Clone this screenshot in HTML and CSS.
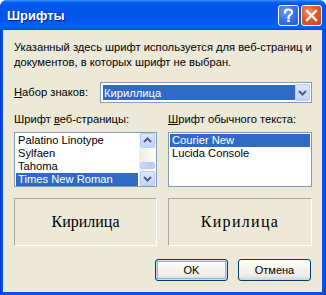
FILE: index.html
```html
<!DOCTYPE html>
<html lang="ru">
<head>
<meta charset="utf-8">
<title>Шрифты</title>
<link rel="stylesheet" href="styles.css">
</head>
<body>
<div class="window">
  <div class="titlebar">
    <span class="title">Шрифты</span>
    <div class="caption-buttons">
      <div class="cap-btn help">
        <svg width="21" height="21" viewBox="0 0 21 21"><path d="M7 7.5 Q7 4.5 10.5 4.5 Q14 4.5 14 7.3 Q14 9 12.2 10 Q10.5 11 10.5 12.8" fill="none" stroke="#fff" stroke-width="2.2" stroke-linecap="square"/><rect x="9.3" y="14.6" width="2.4" height="2.4" fill="#fff"/></svg>
      </div>
      <div class="cap-btn close">
        <svg width="21" height="21" viewBox="0 0 21 21"><path d="M6 6 L15 15 M15 6 L6 15" stroke="#fff" stroke-width="2.3" stroke-linecap="square"/></svg>
      </div>
    </div>
  </div>
  <div class="client">
    <p class="desc">Указанный здесь шрифт используется для веб-страниц и документов, в которых шрифт не выбран.</p>
    <div class="charset-row">
      <span class="label"><u>Н</u>абор знаков:</span>
      <div class="combo">
        <span class="combo-value">Кириллица</span>
        <span class="combo-btn">
          <svg width="15" height="17" viewBox="0 0 15 17"><path d="M4 7 L7.5 10.5 L11 7" fill="none" stroke="#4D6185" stroke-width="2"/></svg>
        </span>
      </div>
    </div>
    <div class="columns">
      <div class="col">
        <span class="label">Шрифт <u>в</u>еб-страницы:</span>
        <div class="listbox">
          <ul class="items">
            <li>Palatino Linotype</li>
            <li>Sylfaen</li>
            <li>Tahoma</li>
            <li class="sel">Times New Roman</li>
          </ul>
          <div class="scrollbar">
            <span class="sb-btn"><svg width="15" height="15" viewBox="0 0 15 15"><path d="M4 9 L7.5 5.5 L11 9" fill="none" stroke="#4D6185" stroke-width="2"/></svg></span>
            <span class="sb-track"><span class="sb-thumb"></span></span>
            <span class="sb-btn"><svg width="15" height="15" viewBox="0 0 15 15"><path d="M4 6 L7.5 9.5 L11 6" fill="none" stroke="#4D6185" stroke-width="2"/></svg></span>
          </div>
        </div>
      </div>
      <div class="col">
        <span class="label"><u>Ш</u>рифт обычного текста:</span>
        <div class="listbox">
          <ul class="items">
            <li class="sel">Courier New</li>
            <li>Lucida Console</li>
          </ul>
        </div>
      </div>
      <div class="preview serif">Кирилица</div>
      <div class="preview mono">Кирилица</div>
    </div>
    <div class="buttons">
      <button class="btn default">OK</button>
      <button class="btn">Отмена</button>
    </div>
  </div>
</div>
</body>
</html>
```
FILE: styles.css
```css
html, body {
  margin: 0;
  padding: 0;
  background: #ffffff;
}
.window {
  width: 326px;
  height: 295px;
  display: flex;
  flex-direction: column;
  background: linear-gradient(to right, #0831D9 0, #0054E3 2px, #0054E3 calc(100% - 2px), #0831D9 100%);
  border-radius: 7px 7px 0 0;
  overflow: hidden;
  font-family: "Liberation Sans", Arial, sans-serif;
  font-size: 11.2px;
  color: #000;
}
.titlebar {
  height: 30px;
  flex: none;
  display: flex;
  align-items: center;
  justify-content: space-between;
  padding: 0 4px 0 7px;
  background: linear-gradient(to bottom, #3D95FF 0, #0A66F7 2px, #0058EE 4px, #0055E8 40%, #0058EE 70%, #0064FA 88%, #005AEB 96%, #0046D8 100%);
}
.title {
  color: #fff;
  font-family: "Liberation Sans", Arial, sans-serif;
  font-weight: bold;
  font-size: 13px;
  text-shadow: 1px 1px 0 #0F1E8C;
  padding-top: 1px;
}
.caption-buttons {
  display: flex;
  gap: 2px;
  padding-top: 1px;
}
.cap-btn {
  width: 21px;
  height: 21px;
  box-sizing: border-box;
  border: 1px solid #fff;
  border-radius: 3px;
  display: flex;
  align-items: center;
  justify-content: center;
}
.cap-btn svg { display: block; margin: -1px; }
.help {
  background: radial-gradient(circle at 35% 30%, #6C9DF8 0, #3E76EA 45%, #2356D8 100%);
}
.close {
  background: radial-gradient(circle at 35% 30%, #F0906A 0, #E2582F 45%, #C8401C 100%);
}
.client {
  flex: 1;
  margin: 0 4px 3px 3px;
  background: #ECE9D8;
  padding: 10px 10px 0 11px;
  display: flex;
  flex-direction: column;
}
.desc {
  margin: 0;
  line-height: 15px;
  width: 300px;
}
.label { white-space: nowrap; }
.charset-row {
  margin-top: 12px;
  display: flex;
  align-items: center;
  justify-content: space-between;
}
.combo {
  width: 212px;
  height: 21px;
  box-sizing: border-box;
  border: 1px solid #7F9DB9;
  background: #fff;
  display: flex;
  align-items: center;
  padding: 1px;
}
.combo-value {
  flex: 1;
  align-self: stretch;
  margin: 1px 0 1px 1px;
  background: #316AC5;
  color: #fff;
  padding-left: 1px;
  display: flex;
  align-items: center;
}
.combo-btn {
  width: 15px;
  height: 17px;
  flex: none;
  box-sizing: border-box;
  border: 1px solid #B9CBF3;
  border-radius: 2px;
  background: linear-gradient(to bottom, #DCE6FD, #C1D3FB);
}
.combo-btn svg, .sb-btn svg { display: block; margin: -1px; }
.columns {
  margin-top: 10px;
  display: grid;
  grid-template-columns: 143px 144px;
  column-gap: 11px;
}
.col {
  display: flex;
  flex-direction: column;
  gap: 6px;
}
.label { line-height: 13px; }
.listbox {
  height: 55px;
  box-sizing: border-box;
  border: 1px solid #7F9DB9;
  background: #fff;
  display: flex;
}
.items {
  list-style: none;
  margin: 0;
  padding: 1px 1px 0 1px;
  flex: 1;
}
.items li {
  height: 13px;
  line-height: 13px;
  padding-left: 2px;
  white-space: nowrap;
}
.items li.sel {
  background: #316AC5;
  color: #fff;
}
.scrollbar {
  width: 17px;
  flex: none;
  display: flex;
  flex-direction: column;
  background: #F4F3EE;
}
.sb-btn {
  height: 15px;
  flex: none;
  box-sizing: border-box;
  margin: 0 1px;
  border: 1px solid #B9CBF3;
  border-radius: 2px;
  background: linear-gradient(to bottom, #DCE6FD, #C1D3FB);
}
.sb-track {
  flex: 1;
  display: flex;
  flex-direction: column;
  justify-content: flex-end;
  padding: 0 1px 2px;
  background: linear-gradient(to right, #EEEDE5, #FDFDFA);
}
.sb-thumb {
  height: 7px;
  box-sizing: border-box;
  border: 1px solid #B9CBF3;
  border-radius: 2px;
  background: linear-gradient(to right, #C9D8FC, #B8CCF9);
}
.preview {
  margin-top: 11px;
  height: 48px;
  box-sizing: border-box;
  border: 1px solid;
  border-color: #ACA899 #FFFFFF #FFFFFF #ACA899;
  display: flex;
  align-items: center;
  justify-content: center;
  font-size: 16px;
}
.serif { font-family: "Liberation Serif", "Times New Roman", serif; }
.mono {
  font-family: "Liberation Serif", "Courier New", serif;
  letter-spacing: 1.3px;
}
.buttons {
  margin-top: 13px;
  display: flex;
  justify-content: flex-end;
  gap: 10px;
  padding-right: 1px;
}
.btn {
  width: 73px;
  height: 22px;
  box-sizing: border-box;
  border: 1px solid #003C74;
  border-radius: 3px;
  background: linear-gradient(to bottom, #FFFFFF 0, #F6F5F0 40%, #ECEBE6 80%, #D6D0C5 100%);
  font-family: "Liberation Sans", Arial, sans-serif;
  font-size: 11px;
  color: #000;
  padding: 0;
}
.btn.default {
  box-shadow: inset 0 0 0 1px #C6DCF9, inset 0 0 0 2px #8DB2EE;
}
```
